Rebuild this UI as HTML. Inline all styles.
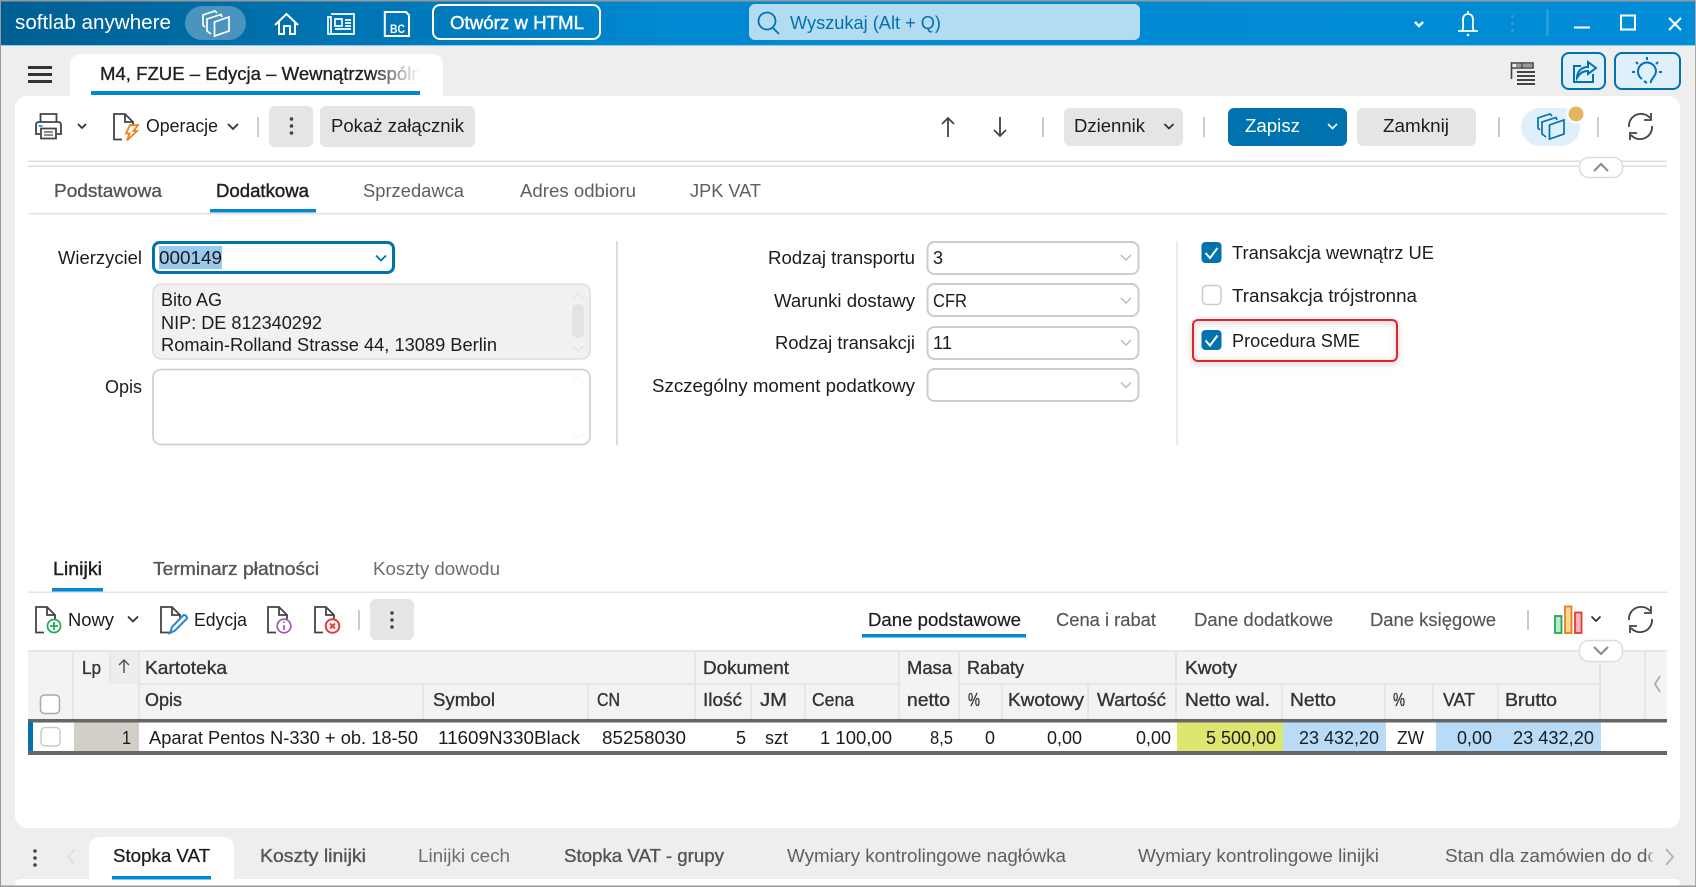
<!DOCTYPE html>
<html lang="pl"><head><meta charset="utf-8"><title>M4, FZUE - Edycja</title>
<style>
html,body{margin:0;padding:0;background:#eee;width:1696px;height:887px;overflow:hidden}
svg{display:block}
text{font-family:"Liberation Sans",Arial,sans-serif;font-size:18.400px;fill:#1c1c1c}
.g{fill:#5f5f5f}.l{fill:#6e6e6e}
.m{stroke:#222;stroke-width:.4px}
.mg{fill:#555;stroke:#555;stroke-width:.35px}
.h{fill:#333;stroke:#333;stroke-width:.35px}
.ic{fill:none;stroke:#444;stroke-width:1.8}
.ch{fill:none;stroke:#333;stroke-width:1.8}
.sep{stroke:#ccc;stroke-width:2}
.dv{stroke:#e6e6e6;stroke-width:2}
.w{fill:none;stroke:#fff;stroke-width:2}
.b{fill:none;stroke:#0073ae;stroke-width:2}
.inp{fill:#fff;stroke:#ccc;stroke-width:2}
</style></head><body>
<svg width="1696" height="887" viewBox="0 0 1696 887" xmlns="http://www.w3.org/2000/svg">
<defs>
<linearGradient id="bar" x1="0" x2="1"><stop offset="0" stop-color="#005f92"/><stop offset=".4" stop-color="#0089d2"/><stop offset="1" stop-color="#008cd6"/></linearGradient>
<linearGradient id="fw" x1="0" x2="1"><stop offset="0" stop-color="#fff" stop-opacity="0"/><stop offset="1" stop-color="#fff"/></linearGradient>
<linearGradient id="fg" x1="0" x2="1"><stop offset="0" stop-color="#eee" stop-opacity="0"/><stop offset="1" stop-color="#eee"/></linearGradient>
<g id="doc" fill="none" stroke="#444" stroke-width="1.800"><path d="M6 26.500H1V1H12L20 9V13M12 1V9H20M1 26.500H9"/></g>
<g id="pg" fill="none" stroke-width="1.700"><path d="M12.500 12L27 7V21L12.500 26Z"/><path d="M9 24L5 21V9L19 4.500L20 7"/><path d="M3 17L1 15V5L13 1L15 3"/></g>
<g id="rf" fill="none" stroke="#444" stroke-width="1.800"><path d="M2 14A12 12 0 0 1 23 5M24 0V7H17"/><path d="M25 13A12 12 0 0 1 4 22M3 27V20H10"/></g>
</defs>

<rect width="1696" height="887" fill="#eee"/>
<!-- title bar -->
<rect width="1696" height="45" fill="url(#bar)"/>
<rect y="45" width="1696" height="1" fill="#8fcbea"/>
<rect width="1696" height="1.500" fill="#999"/>
<text x="15" y="29" style="font-size:20px;fill:#fff" textLength="156" lengthAdjust="spacingAndGlyphs">softlab anywhere</text>
<rect x="185" y="6" width="61" height="34" rx="17" fill="#4a94bd"/>
<use href="#pg" x="202" y="10" style="stroke:#fff"/>
<g class="w"><path d="M275 25L286.500 14L298 25M279 22V34H284V26H290V34H295V22"/></g>
<g fill="none" stroke="#fff" stroke-width="1.700"><path d="M331 14H354V34H328V17H331V34M335 19H342V26H335ZM345 20H351M345 23H351M345 26H351M335 29H351"/></g>
<path d="M384.800 12H406L409 15V36H384.800Z" class="w"/>
<text x="390" y="33" style="font-size:12px;font-weight:bold;fill:#fff" textLength="15" lengthAdjust="spacingAndGlyphs">BC</text>
<rect x="433" y="5" width="167" height="34" rx="7" fill="none" stroke="#fff" stroke-width="2"/>
<text x="450" y="29" style="fill:#fff;stroke:#fff;stroke-width:.4px" textLength="134" lengthAdjust="spacingAndGlyphs">Otwórz w HTML</text>
<rect x="749" y="4" width="391" height="36" rx="6" fill="#b3dbf2"/>
<g fill="none" stroke="#0073ae" stroke-width="1.800"><circle cx="767" cy="21" r="8.500"/><path d="M773 28L779 34"/></g>
<text x="790" y="29" style="fill:#0073ae" textLength="151" lengthAdjust="spacingAndGlyphs">Wyszukaj (Alt + Q)</text>
<path d="M1415 22L1419 26L1423 22" fill="none" stroke="#fff" stroke-width="2.400"/>
<g fill="none" stroke="#fff" stroke-width="1.800"><path d="M1458 31H1478M1462 31C1464 28 1463 24 1463 20C1463 16 1465 14 1468 14C1471 14 1473 16 1473 20C1473 24 1472 28 1474 31M1468 14V11"/></g>
<circle cx="1468" cy="35" r="1.300" fill="#fff"/>
<g fill="#2a98d6"><rect x="1511" y="15" width="3" height="3"/><rect x="1511" y="22" width="3" height="3"/><rect x="1511" y="29" width="3" height="3"/></g>
<rect x="1546" y="9" width="3" height="27" fill="#2a9ad8"/>
<rect x="1574" y="26.500" width="16" height="2" fill="#fff"/>
<rect x="1621" y="15.500" width="14" height="14" fill="none" stroke="#fff" stroke-width="2"/>
<path d="M1669 18L1681 30M1681 18L1669 30" fill="none" stroke="#fff" stroke-width="2"/>

<!-- second row -->
<rect x="28" y="66" width="24" height="3" fill="#333"/><rect x="28" y="73" width="24" height="3" fill="#333"/><rect x="28" y="80" width="24" height="3" fill="#333"/>
<path d="M70 100V66Q70 54 82 54H431Q443 54 443 66V100Z" fill="#fff"/>
<text x="100" y="80" style="fill:#222;stroke:#222;stroke-width:.35px" textLength="332" lengthAdjust="spacingAndGlyphs">M4, FZUE – Edycja – Wewnątrzwspólna</text>
<rect x="370" y="60" width="50" height="28" fill="url(#fw)"/><rect x="420" y="60" width="20" height="28" fill="#fff"/>
<rect x="91" y="91" width="329" height="4" fill="#0089d2"/>
<g fill="none" stroke="#444" stroke-width="1.600"><path d="M1511.500 62V79"/><path d="M1511.500 63H1533V68H1511.500"/><path d="M1522 63V68"/></g>
<rect x="1516" y="64" width="5" height="3" fill="#999"/><rect x="1523" y="64" width="9" height="3" fill="#999"/>
<g fill="#444"><rect x="1517" y="71" width="18" height="2"/><rect x="1517" y="75" width="18" height="2"/><rect x="1517" y="79" width="18" height="2"/><rect x="1517" y="83" width="18" height="2"/></g>
<rect x="1562" y="53" width="43" height="36" rx="7" fill="#dff0fa" stroke="#0073ae" stroke-width="2"/>
<g class="b"><path d="M1593 74V82H1574V66H1581"/><path d="M1577 78C1577 71 1582 67 1588 67V62L1596 68L1588 74V71C1583 71 1580 73 1577 78Z"/></g>
<rect x="1615" y="53" width="65" height="36" rx="7" fill="#dff0fa" stroke="#0073ae" stroke-width="2"/>
<g class="b"><path d="M1651 83C1650 79 1656 77 1656 71A9 9 0 1 0 1642 79M1644 81L1647 83"/><path d="M1647 57V60M1636 62L1638 64M1658 62L1656 64M1632 72H1635M1659 72H1662"/></g>

<!-- main panel -->
<rect x="15" y="96" width="1665" height="732" rx="12" fill="#fff"/>
<path d="M0 0V887" stroke="#999" stroke-width="2"/>
<path d="M1695.500 0V887" stroke="#aaa" stroke-width="1"/>

<!-- toolbar -->
<g class="ic"><path d="M40.500 122V114H56.500V122"/><path d="M40 134H36V125Q36 122 39 122H58Q61 122 61 125V134H57"/><path d="M41 128.500H56V138.500H41Z"/><path d="M44 132H53M44 135H53" stroke-width="1.200"/></g>
<rect x="38.500" y="125" width="4" height="1.800" fill="#2a98d6"/>
<path d="M78 124L82 128L86 124" class="ch"/>
<use href="#doc" x="113" y="113"/>
<path d="M130 125H138L133.500 131H137L127 140.500L129.500 133.500H126Z" fill="none" stroke="#f08020" stroke-width="1.800"/>
<text x="146" y="132" textLength="72" lengthAdjust="spacingAndGlyphs">Operacje</text>
<path d="M228 124L233 129L238 124" class="ch" stroke-width="1.500"/>
<path d="M258 117V137" class="sep"/>
<rect x="269" y="106" width="44" height="41" rx="6" fill="#e5e5e5"/>
<g fill="#444"><circle cx="291.500" cy="119" r="1.800"/><circle cx="291.500" cy="126" r="1.800"/><circle cx="291.500" cy="133" r="1.800"/></g>
<rect x="320" y="106" width="155" height="41" rx="6" fill="#e5e5e5"/>
<text x="331" y="132" textLength="133" lengthAdjust="spacingAndGlyphs">Pokaż załącznik</text>

<g class="ic"><path d="M948 137V118M942 124L948 118L954 124"/><path d="M1000 117V136M994 130L1000 136L1006 130"/></g>
<path d="M1043 117V137M1204 117V137M1499 117V137M1598 117V137" class="sep"/>
<rect x="1064" y="108" width="119" height="38" rx="6" fill="#e5e5e5"/>
<text x="1074" y="132" textLength="71" lengthAdjust="spacingAndGlyphs">Dziennik</text>
<path d="M1164.500 124L1169 128.500L1173.500 124" class="ch"/>
<rect x="1228" y="108" width="119" height="38" rx="6" fill="#0073ae"/>
<text x="1245" y="132" style="fill:#fff" textLength="55" lengthAdjust="spacingAndGlyphs">Zapisz</text>
<path d="M1328 124L1332.500 128.500L1337 124" fill="none" stroke="#fff" stroke-width="1.600"/>
<rect x="1357" y="108" width="119" height="38" rx="6" fill="#e5e5e5"/>
<text x="1383" y="132" textLength="66" lengthAdjust="spacingAndGlyphs">Zamknij</text>
<rect x="1521" y="108" width="59" height="38" rx="19" fill="#dff0fa"/>
<use href="#pg" x="1537" y="113" style="stroke:#0073ae"/>
<circle cx="1576" cy="114" r="9.500" fill="#fff"/><circle cx="1576" cy="114" r="7.500" fill="#e2b55f"/>
<use href="#rf" x="1627" y="113"/>

<rect x="28" y="160.500" width="1639" height="1.500" fill="#ddd"/><rect x="28" y="165.500" width="1639" height="1.500" fill="#ddd"/>
<rect x="1579.500" y="157.500" width="43" height="20" rx="9" fill="#fff" stroke="#ddd" stroke-width="1.500"/>
<path d="M1594 171L1601 164L1608 171" fill="none" stroke="#888" stroke-width="2"/>

<!-- tabs -->
<text x="54" y="197" class="mg" textLength="108" lengthAdjust="spacingAndGlyphs">Podstawowa</text>
<text x="216" y="197" class="m" textLength="93" lengthAdjust="spacingAndGlyphs">Dodatkowa</text>
<text x="363" y="197" class="g" textLength="101" lengthAdjust="spacingAndGlyphs">Sprzedawca</text>
<text x="520" y="197" class="g" textLength="116" lengthAdjust="spacingAndGlyphs">Adres odbioru</text>
<text x="690" y="197" class="g" textLength="71" lengthAdjust="spacingAndGlyphs">JPK VAT</text>
<rect x="210" y="209" width="106" height="3.500" fill="#0089d2"/>
<rect x="28" y="213" width="1639" height="1.500" fill="#e3e3e3"/>

<!-- form left -->
<text x="58" y="264" textLength="84" lengthAdjust="spacingAndGlyphs">Wierzyciel</text>
<rect x="153.500" y="242.500" width="240" height="30" rx="6" fill="#fff" stroke="#0073ae" stroke-width="3"/>
<rect x="159" y="246" width="63" height="23" fill="#99c9ef"/>
<text x="159" y="264" textLength="63" lengthAdjust="spacingAndGlyphs">000149</text>
<path d="M376 255.500L381 260.500L386 255.500" fill="none" stroke="#0073ae" stroke-width="1.800"/>
<rect x="153" y="284" width="437" height="75" rx="8" fill="#f1f1f1" stroke="#ddd" stroke-width="1.500"/>
<text x="161" y="306" textLength="61" lengthAdjust="spacingAndGlyphs">Bito AG</text>
<text x="161" y="329" textLength="161" lengthAdjust="spacingAndGlyphs">NIP: DE 812340292</text>
<text x="161" y="351" textLength="336" lengthAdjust="spacingAndGlyphs">Romain-Rolland Strasse 44, 13089 Berlin</text>
<rect x="572" y="304" width="12" height="34" rx="6" fill="#e3e3e3"/>
<path d="M573 298L578 293L583 298M573 346L578 351L583 346" fill="none" stroke="#e3e3e3" stroke-width="1.500"/>
<text x="105" y="393" textLength="37" lengthAdjust="spacingAndGlyphs">Opis</text>
<rect x="153" y="369.500" width="437" height="75" rx="8" class="inp" style="stroke-width:1.600"/>
<path d="M573 382L578 377L583 382M573 433L578 438L583 433" fill="none" stroke="#f8f8f8" stroke-width="1.500"/>
<rect x="616" y="241" width="2" height="204" fill="#ddd"/>

<!-- form middle -->
<text x="768" y="264" textLength="147" lengthAdjust="spacingAndGlyphs">Rodzaj transportu</text>
<text x="774" y="307" textLength="141" lengthAdjust="spacingAndGlyphs">Warunki dostawy</text>
<text x="775" y="349" textLength="140" lengthAdjust="spacingAndGlyphs">Rodzaj transakcji</text>
<text x="652" y="392" textLength="263" lengthAdjust="spacingAndGlyphs">Szczególny moment podatkowy</text>
<rect x="927.500" y="242" width="211" height="32" rx="7" class="inp"/>
<rect x="927.500" y="284" width="211" height="32" rx="7" class="inp"/>
<rect x="927.500" y="327" width="211" height="32" rx="7" class="inp"/>
<rect x="927.500" y="369" width="211" height="32" rx="7" class="inp"/>
<text x="933" y="264" textLength="10" lengthAdjust="spacingAndGlyphs">3</text>
<text x="933" y="307" textLength="34" lengthAdjust="spacingAndGlyphs">CFR</text>
<text x="933" y="349" textLength="19" lengthAdjust="spacingAndGlyphs">11</text>
<path d="M1121 255L1126 260L1131 255M1121 298L1126 303L1131 298M1121 340L1126 345L1131 340M1121 382.500L1126 387.500L1131 382.500" fill="none" stroke="#bbb" stroke-width="1.500"/>
<rect x="1176.500" y="241" width="1.200" height="204" fill="#ddd"/>

<!-- checks -->
<rect x="1201.500" y="242" width="20" height="21" rx="4" fill="#0073ae"/>
<path d="M1205.500 253L1210 258L1217.500 248" fill="none" stroke="#fff" stroke-width="2"/>
<text x="1232" y="259" textLength="202" lengthAdjust="spacingAndGlyphs">Transakcja wewnątrz UE</text>
<rect x="1202.500" y="285.500" width="18.500" height="19" rx="4" fill="#fff" stroke="#ccc" stroke-width="1.500"/>
<text x="1232" y="302" textLength="185" lengthAdjust="spacingAndGlyphs">Transakcja trójstronna</text>
<rect x="1193" y="320" width="204" height="41" rx="5" fill="none" stroke="#e8202a" stroke-width="2" style="filter:drop-shadow(0 2px 3px rgba(0,0,0,.3))"/>
<rect x="1201.500" y="330" width="20" height="20" rx="4" fill="#0073ae"/>
<path d="M1205.500 340.500L1210 345.500L1217.500 335.500" fill="none" stroke="#fff" stroke-width="2"/>
<text x="1232" y="347" textLength="128" lengthAdjust="spacingAndGlyphs">Procedura SME</text>

<!-- lower tabs -->
<text x="53" y="575" class="m" textLength="49" lengthAdjust="spacingAndGlyphs">Linijki</text>
<text x="153" y="575" class="mg" textLength="166" lengthAdjust="spacingAndGlyphs">Terminarz płatności</text>
<text x="373" y="575" class="l" textLength="127" lengthAdjust="spacingAndGlyphs">Koszty dowodu</text>
<rect x="52" y="588" width="51" height="3.500" fill="#0089d2"/>
<rect x="28" y="591.500" width="1639" height="1.500" fill="#e3e3e3"/>

<!-- lower toolbar -->
<use href="#doc" x="35" y="606"/>
<g fill="none" stroke="#1eaa55" stroke-width="1.700"><circle cx="54" cy="626" r="6.500"/><path d="M54 622V630M50 626H58"/></g>
<text x="68" y="626" textLength="46" lengthAdjust="spacingAndGlyphs">Nowy</text>
<path d="M128 616.500L133 621.500L138 616.500" class="ch"/>
<use href="#doc" x="160" y="606"/>
<g fill="none" stroke="#2a86d0" stroke-width="2"><path d="M170 633L172 627L183 615.500C185 614 188 617 186.500 619L175 630.500Z"/></g>
<text x="194" y="626" textLength="53" lengthAdjust="spacingAndGlyphs">Edycja</text>
<use href="#doc" x="267" y="606"/>
<g fill="none" stroke="#a055b0" stroke-width="1.700"><circle cx="284" cy="626" r="6.800"/><path d="M284 625V630M284 621.500V623"/></g>
<use href="#doc" x="314" y="606"/>
<g fill="none" stroke="#ea3a3a" stroke-width="2"><circle cx="332.500" cy="626" r="6.800"/><path d="M330 623.500L335 628.500M335 623.500L330 628.500"/></g>
<path d="M359 610V630" class="sep"/>
<rect x="370" y="599" width="44" height="41" rx="6" fill="#e5e5e5"/>
<g fill="#444"><circle cx="392" cy="613" r="1.800"/><circle cx="392" cy="620" r="1.800"/><circle cx="392" cy="627" r="1.800"/></g>

<text x="868" y="626" class="m" style="stroke-width:.2px" textLength="153" lengthAdjust="spacingAndGlyphs">Dane podstawowe</text>
<rect x="862" y="634" width="164" height="3.500" fill="#0089d2"/>
<text x="1056" y="626" class="mg" style="stroke-width:.15px" textLength="100" lengthAdjust="spacingAndGlyphs">Cena i rabat</text>
<text x="1194" y="626" class="mg" style="stroke-width:.15px" textLength="139" lengthAdjust="spacingAndGlyphs">Dane dodatkowe</text>
<text x="1370" y="626" class="mg" style="stroke-width:.15px" textLength="126" lengthAdjust="spacingAndGlyphs">Dane księgowe</text>
<path d="M1528 610V630" class="sep"/>
<rect x="1555" y="616" width="6.500" height="17" fill="#bfe6c8" stroke="#1eaa55" stroke-width="1.800"/>
<rect x="1565" y="606.500" width="6.500" height="26.500" fill="#f9d88f" stroke="#ea7d22" stroke-width="1.800"/>
<rect x="1575" y="612.500" width="6.500" height="20.500" fill="#f7b7b7" stroke="#e53a3a" stroke-width="1.800"/>
<path d="M1591.500 616.500L1596 621L1600.500 616.500" class="ch" stroke-width="1.500"/>
<use href="#rf" x="1627" y="606"/>

<!-- grid header -->
<rect x="28" y="650" width="1639" height="69" fill="#f3f3f3"/>
<rect x="110" y="650" width="29" height="34" fill="#ededed"/>
<g class="dv">
<path d="M28 651H1667"/>
<path d="M73 650V719M110 650V684M139 650V719"/>
<path d="M139 684H899M959 684H1600"/>
<path d="M423 684V719M588 684V719M695 650V719M751 684V719M805 684V719M899 650V719M959 650V719M1002 684V719M1088 684V719M1176 650V719M1282 684V719M1385 684V719M1433 684V719M1498 684V719M1600 650V719M1645 650V719"/>
</g>
<text x="82" y="674" class="h" textLength="19" lengthAdjust="spacingAndGlyphs">Lp</text>
<path d="M124 673V660M119 665L124 660L129 665" fill="none" stroke="#555" stroke-width="1.500"/>
<text x="145" y="674" class="h" textLength="82" lengthAdjust="spacingAndGlyphs">Kartoteka</text>
<text x="703" y="674" class="h" textLength="86" lengthAdjust="spacingAndGlyphs">Dokument</text>
<text x="907" y="674" class="h" textLength="45" lengthAdjust="spacingAndGlyphs">Masa</text>
<text x="967" y="674" class="h" textLength="57" lengthAdjust="spacingAndGlyphs">Rabaty</text>
<text x="1185" y="674" class="h" textLength="52" lengthAdjust="spacingAndGlyphs">Kwoty</text>
<text x="145" y="706" class="h" textLength="37" lengthAdjust="spacingAndGlyphs">Opis</text>
<text x="433" y="706" class="h" textLength="62" lengthAdjust="spacingAndGlyphs">Symbol</text>
<text x="597" y="706" class="h" textLength="23" lengthAdjust="spacingAndGlyphs">CN</text>
<text x="703" y="706" class="h" textLength="39" lengthAdjust="spacingAndGlyphs">Ilość</text>
<text x="760" y="706" class="h" textLength="27" lengthAdjust="spacingAndGlyphs">JM</text>
<text x="812" y="706" class="h" textLength="42" lengthAdjust="spacingAndGlyphs">Cena</text>
<text x="907" y="706" class="h" textLength="43" lengthAdjust="spacingAndGlyphs">netto</text>
<text x="968" y="706" class="h" textLength="12" lengthAdjust="spacingAndGlyphs">%</text>
<text x="1008" y="706" class="h" textLength="76" lengthAdjust="spacingAndGlyphs">Kwotowy</text>
<text x="1097" y="706" class="h" textLength="69" lengthAdjust="spacingAndGlyphs">Wartość</text>
<text x="1185" y="706" class="h" textLength="85" lengthAdjust="spacingAndGlyphs">Netto wal.</text>
<text x="1290" y="706" class="h" textLength="46" lengthAdjust="spacingAndGlyphs">Netto</text>
<text x="1393" y="706" class="h" textLength="12" lengthAdjust="spacingAndGlyphs">%</text>
<text x="1443" y="706" class="h" textLength="32" lengthAdjust="spacingAndGlyphs">VAT</text>
<text x="1505" y="706" class="h" textLength="52" lengthAdjust="spacingAndGlyphs">Brutto</text>
<rect x="40.500" y="695" width="19" height="18.500" rx="4" fill="#fff" stroke="#aaa" stroke-width="1.500"/>
<path d="M1660 676L1655 684L1660 692" fill="none" stroke="#aaa" stroke-width="1.800"/>
<rect x="1579.500" y="640.500" width="43" height="21" rx="9" fill="#fff" stroke="#ddd" stroke-width="1.500"/>
<path d="M1594 647L1601 654L1608 647" fill="none" stroke="#888" stroke-width="2"/>

<!-- grid row -->
<rect x="28" y="719" width="1639" height="3.500" fill="#666"/>
<rect x="28" y="751" width="1639" height="4" fill="#666"/>
<rect x="28" y="722" width="5" height="29" fill="#0073ae"/>
<rect x="74" y="722.500" width="65" height="28.500" fill="#d3cfc8"/>
<rect x="1177" y="722.500" width="106" height="28.500" fill="#dde66f"/>
<rect x="1283" y="722.500" width="103" height="28.500" fill="#b8dcf8"/>
<rect x="1436" y="722.500" width="165" height="28.500" fill="#b8dcf8"/>
<rect x="41" y="727.500" width="19" height="18.500" rx="4" fill="#fff" stroke="#ccc" stroke-width="1.500"/>
<text x="122" y="744" textLength="9" lengthAdjust="spacingAndGlyphs">1</text>
<text x="149" y="744" textLength="269" lengthAdjust="spacingAndGlyphs">Aparat Pentos N-330 + ob. 18-50</text>
<text x="438" y="744" textLength="142" lengthAdjust="spacingAndGlyphs">11609N330Black</text>
<text x="602" y="744" textLength="84" lengthAdjust="spacingAndGlyphs">85258030</text>
<text x="736" y="744" textLength="10" lengthAdjust="spacingAndGlyphs">5</text>
<text x="765" y="744" textLength="23" lengthAdjust="spacingAndGlyphs">szt</text>
<text x="820" y="744" textLength="72" lengthAdjust="spacingAndGlyphs">1 100,00</text>
<text x="930" y="744" textLength="23" lengthAdjust="spacingAndGlyphs">8,5</text>
<text x="985" y="744" textLength="10" lengthAdjust="spacingAndGlyphs">0</text>
<text x="1047" y="744" textLength="35" lengthAdjust="spacingAndGlyphs">0,00</text>
<text x="1136" y="744" textLength="35" lengthAdjust="spacingAndGlyphs">0,00</text>
<text x="1206" y="744" textLength="70" lengthAdjust="spacingAndGlyphs">5 500,00</text>
<text x="1299" y="744" textLength="80" lengthAdjust="spacingAndGlyphs">23 432,20</text>
<text x="1397" y="744" textLength="27" lengthAdjust="spacingAndGlyphs">ZW</text>
<text x="1457" y="744" textLength="35" lengthAdjust="spacingAndGlyphs">0,00</text>
<text x="1513" y="744" textLength="81" lengthAdjust="spacingAndGlyphs">23 432,20</text>

<!-- bottom strip -->
<rect x="15" y="879" width="1665" height="8" rx="6" fill="#fff"/>
<path d="M89 880V849Q89 837 101 837H222Q234 837 234 849V880Z" fill="#fff"/>
<g fill="#444"><circle cx="35" cy="851" r="1.800"/><circle cx="35" cy="858" r="1.800"/><circle cx="35" cy="865" r="1.800"/></g>
<path d="M75 849L68 857L75 865" fill="none" stroke="#ddd" stroke-width="1.600"/>
<text x="113" y="862" class="m" style="stroke-width:.25px" textLength="97" lengthAdjust="spacingAndGlyphs">Stopka VAT</text>
<rect x="112" y="876" width="99" height="3.500" fill="#0089d2"/>
<text x="260" y="862" class="mg" textLength="106" lengthAdjust="spacingAndGlyphs">Koszty linijki</text>
<text x="418" y="862" class="l" textLength="92" lengthAdjust="spacingAndGlyphs">Linijki cech</text>
<text x="564" y="862" class="mg" textLength="160" lengthAdjust="spacingAndGlyphs">Stopka VAT - grupy</text>
<text x="787" y="862" class="g" textLength="279" lengthAdjust="spacingAndGlyphs">Wymiary kontrolingowe nagłówka</text>
<text x="1138" y="862" class="g" textLength="241" lengthAdjust="spacingAndGlyphs">Wymiary kontrolingowe linijki</text>
<text x="1445" y="862" class="g" textLength="213" lengthAdjust="spacingAndGlyphs">Stan dla zamówien do do</text>
<rect x="1647" y="845" width="7" height="24" fill="url(#fg)"/><rect x="1654" y="845" width="7" height="24" fill="#eee"/>
<path d="M1666 849L1673 857L1666 865" fill="none" stroke="#aaa" stroke-width="1.600"/>
<rect y="885.500" width="1696" height="1.500" fill="#999"/>
</svg>
</body></html>
